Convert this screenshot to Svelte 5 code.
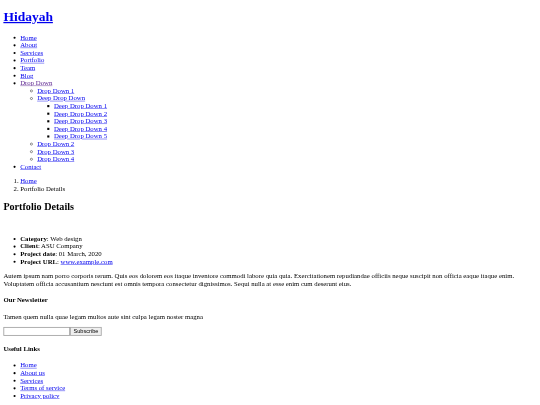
<script>
	const nav = ['Home', 'About', 'Services', 'Portfolio', 'Team', 'Blog']
	const deep = [1, 2, 3, 4, 5]
	const info = [
		['Category', 'Web design'],
		['Client', 'ASU Company'],
		['Project date', '01 March, 2020'],
	]
	const links = ['Home', 'About us', 'Services', 'Terms of service', 'Privacy policy']
</script>

<div class="page">
	<header>
		<h1><a href="#top">Hidayah</a></h1>
		<nav>
			<ul>
				{#each nav as item}
					<li><a href="#top">{item}</a></li>
				{/each}
				<li>
					<a class="visited" href="#top">Drop Down</a>
					<ul>
						<li><a href="#top">Drop Down 1</a></li>
						<li>
							<a href="#top">Deep Drop Down</a>
							<ul>
								{#each deep as n}
									<li><a href="#top">Deep Drop Down {n}</a></li>
								{/each}
							</ul>
						</li>
						<li><a href="#top">Drop Down 2</a></li>
						<li><a href="#top">Drop Down 3</a></li>
						<li><a href="#top">Drop Down 4</a></li>
					</ul>
				</li>
				<li><a href="#top">Contact</a></li>
			</ul>
		</nav>
	</header>

	<main>
		<ol>
			<li><a href="#top">Home</a></li>
			<li>Portfolio Details</li>
		</ol>
		<h2>Portfolio Details</h2>
		<div class="slides"></div>
		<ul>
			{#each info as [label, value]}
				<li><strong>{label}</strong>: {value}</li>
			{/each}
			<li><strong>Project URL</strong>: <a href="#top">www.example.com</a></li>
		</ul>
		<p>
			Autem ipsum nam porro corporis rerum. Quis eos dolorem eos itaque inventore commodi labore quia quia. Exercitationem repudiandae officiis neque suscipit non officia eaque itaque enim. Voluptatem officia accusantium nesciunt est omnis tempora consectetur dignissimos. Sequi nulla at esse enim cum deserunt eius.
		</p>
	</main>

	<footer>
		<h4>Our Newsletter</h4>
		<p>Tamen quem nulla quae legam multos aute sint culpa legam noster magna</p>
		<form>
			<input type="email" /><input type="submit" value="Subscribe" />
		</form>
		<h4>Useful Links</h4>
		<ul>
			{#each links as link}
				<li><a href="#top">{link}</a></li>
			{/each}
		</ul>
	</footer>
</div>

<style>
	:global(body) {
		height: 405px;
		overflow: hidden;
	}

	.page {
		display: flow-root;
		transform: scale(0.421875);
		transform-origin: 0 0;
		filter: blur(1px);
		padding: 0 8px;
		width: 1264px;
		height: 960px;
		overflow: hidden;
		color: #000;
		font-family: 'Liberation Serif', serif;
		font-size: 16px;
	}

	a {
		color: #00e;
	}

	a.visited {
		color: #551a8b;
	}

	.slides {
		height: 18px;
	}

	input {
		box-sizing: border-box;
		height: 21px;
		vertical-align: top;
		font-family: 'Liberation Sans', sans-serif;
		font-size: 13.333px;
	}

	input[type='email'] {
		border: 2px solid #a0a0a0;
		width: 158px;
	}

	input[type='submit'] {
		border: 2px solid #a8a8a8;
		background: #efefef;
		padding: 1px 6px;
		width: 75px;
	}
</style>
